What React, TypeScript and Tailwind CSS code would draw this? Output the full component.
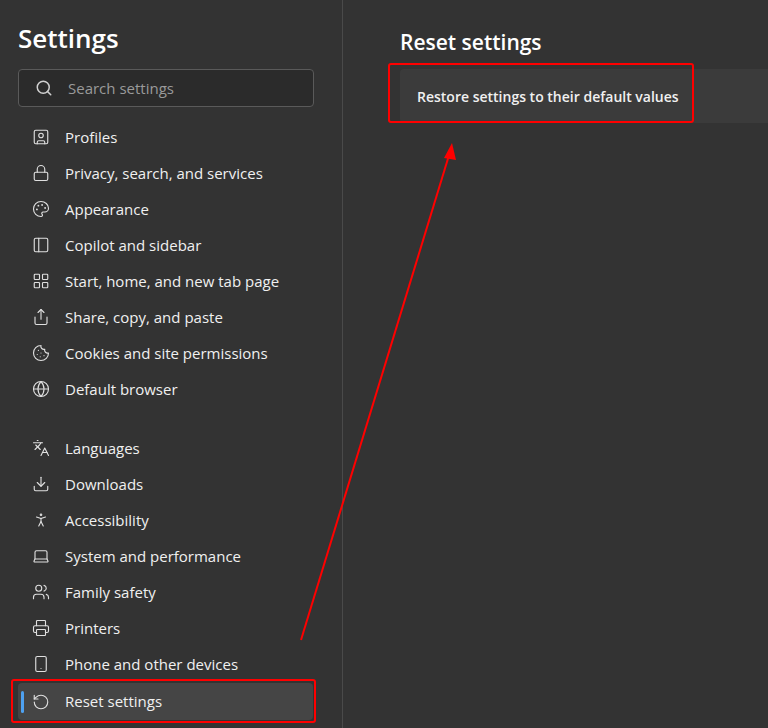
import { Search, RotateCcw, Lock, Palette, PanelLeft, LayoutGrid, Share, Cookie, Globe, Languages, Download, PersonStanding, Laptop, Users, Printer, Smartphone, UserSquare } from "lucide-react";

const groupA = [
  { icon: UserSquare, label: "Profiles" },
  { icon: Lock, label: "Privacy, search, and services" },
  { icon: Palette, label: "Appearance" },
  { icon: PanelLeft, label: "Copilot and sidebar" },
  { icon: LayoutGrid, label: "Start, home, and new tab page" },
  { icon: Share, label: "Share, copy, and paste" },
  { icon: Cookie, label: "Cookies and site permissions" },
  { icon: Globe, label: "Default browser" },
];

const groupB = [
  { icon: Languages, label: "Languages" },
  { icon: Download, label: "Downloads" },
  { icon: PersonStanding, label: "Accessibility" },
  { icon: Laptop, label: "System and performance" },
  { icon: Users, label: "Family safety" },
  { icon: Printer, label: "Printers" },
  { icon: Smartphone, label: "Phone and other devices" },
];

function Item({ icon: Icon, label }: { icon: any; label: string }) {
  return (
    <div className="flex items-center h-9 pl-[32px] gap-[15px]">
      <Icon size={18} strokeWidth={1.5} className="text-[#e0e0e0]" />
      <span className="text-[15px] text-[#f0f0f0]">{label}</span>
    </div>
  );
}

export default function App() {
  return (
    <div className="relative w-[768px] h-[728px] overflow-hidden bg-[#333333] flex" style={{ fontFamily: '"Open Sans", "Noto Sans", sans-serif' }}>
      <div className="w-[343px] shrink-0 border-r border-[#4a4a4a] pl-[18px] pr-[28px] pt-[20px]">
        <h1 className="text-[26px] font-semibold text-white leading-[36px]">Settings</h1>
        <div className="mt-[13px] h-[38px] flex items-center gap-[15px] pl-[16px] rounded border border-[#5a5a5a] bg-[#2b2b2b]">
          <Search size={18} className="text-[#d0d0d0]" />
          <span className="text-[15px] text-[#9a9a9a]">Search settings</span>
        </div>
        <div className="mt-[12px] -ml-[18px]">
          {groupA.map((i) => <Item key={i.label} {...i} />)}
          <div className="h-[23px]" />
          {groupB.map((i) => <Item key={i.label} {...i} />)}
          <div className="relative ml-[18px] mt-[1px] h-[37px] w-[295px] bg-[#454545] rounded flex items-center pl-[14px] gap-[15px]">
            <div className="absolute left-[3px] top-[8px] w-[3px] h-[22px] rounded bg-[#4ea1f0]" />
            <RotateCcw size={18} strokeWidth={1.5} className="text-[#e0e0e0]" />
            <span className="text-[15px] text-[#f0f0f0]">Reset settings</span>
            <div className="absolute -left-[7px] -top-[4px] -right-[3px] -bottom-[3px] border-2 border-[#ff0000] rounded-[3px]" />
          </div>
        </div>
      </div>
      <div className="flex-1 pt-[28px] pl-[57px]">
        <h2 className="text-[21px] font-semibold text-white leading-[28px]">Reset settings</h2>
        <div className="relative mt-[13px] h-[54px] bg-[#3b3b3b] rounded-l flex items-center pl-[17px]">
          <span className="text-[14px] font-semibold text-[#f0f0f0]">Restore settings to their default values</span>
          <div className="absolute -left-[12px] -top-[6px] w-[306px] h-[60px] border-2 border-[#ff0000] rounded-[3px]" />
        </div>
      </div>
      <svg className="absolute inset-0 pointer-events-none" width="768" height="728">
        <line x1="301" y1="640" x2="450" y2="152" stroke="#ff0000" strokeWidth="2" />
        <polygon points="452,143 444,158 456,160" fill="#ff0000" />
      </svg>
    </div>
  );
}
